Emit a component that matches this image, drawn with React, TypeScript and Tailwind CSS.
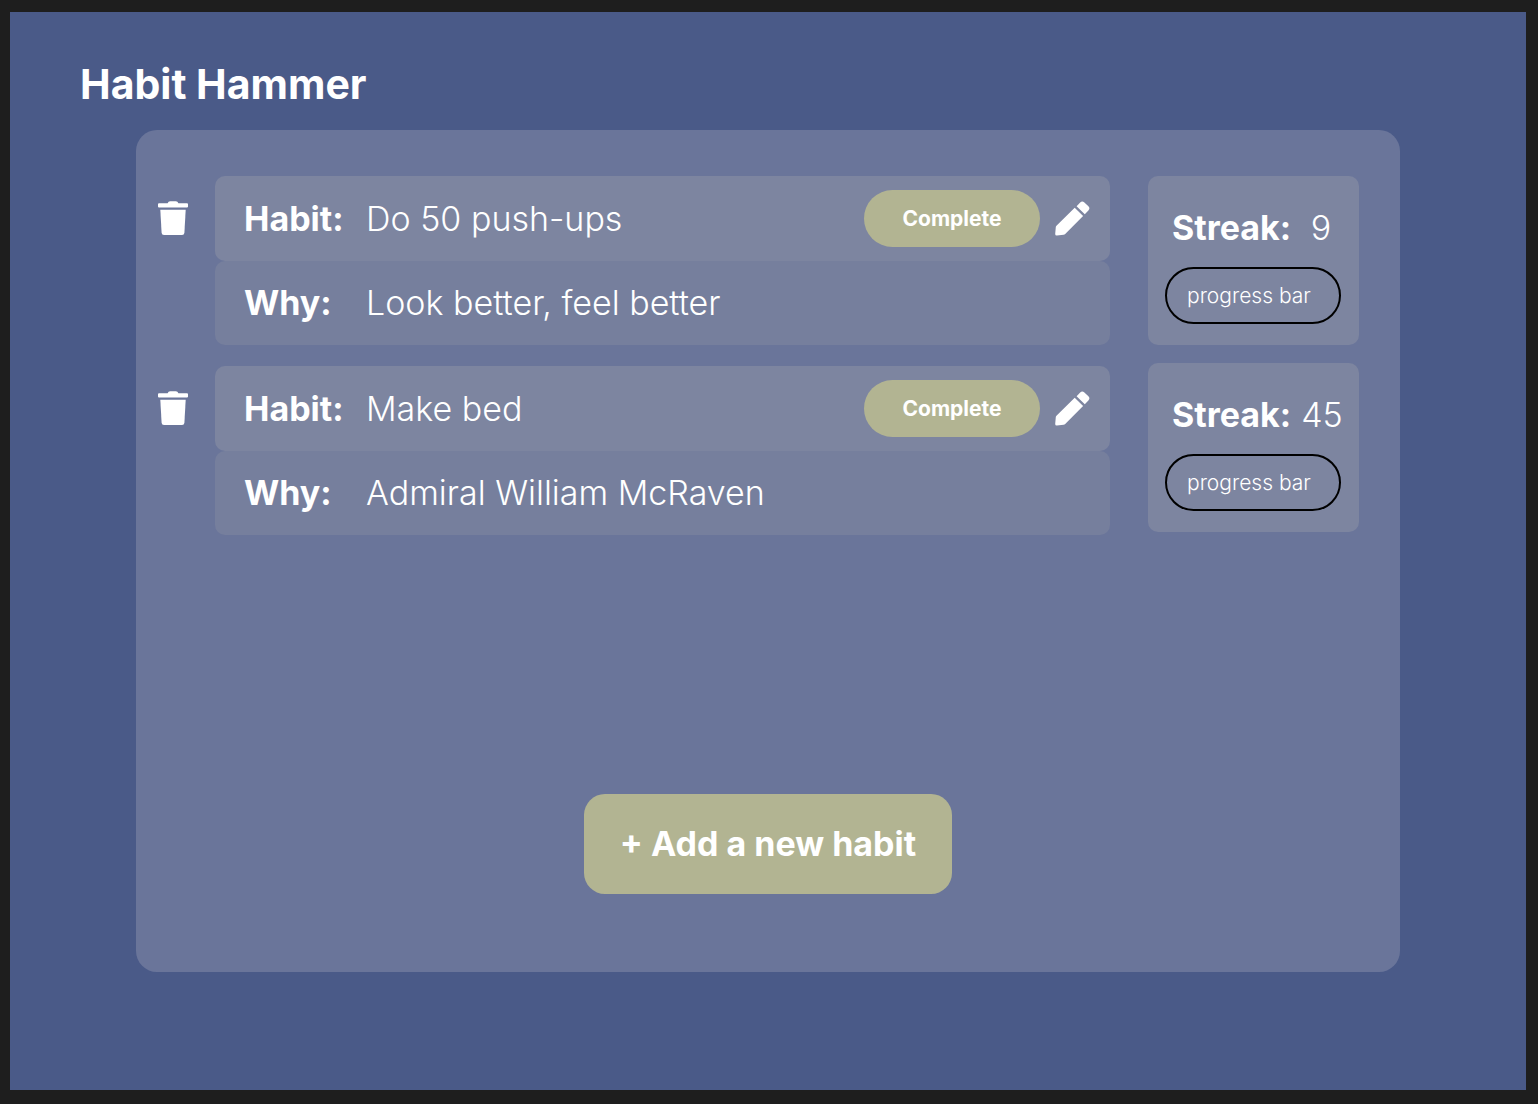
type Habit = {
  name: string;
  why: string;
  streak: number;
};

const habits: Habit[] = [
  { name: "Do 50 push-ups", why: "Look better, feel better", streak: 9 },
  { name: "Make bed", why: "Admiral William McRaven", streak: 45 },
];

function TrashIcon() {
  return (
    <svg viewBox="0 0 30 34" className="h-[34px] w-[30px]" fill="currentColor" aria-hidden="true">
      <path d="M1 2.2h8.6L10.600.8Q11.200.200 12.200.200h5.600q1 0 1.600.600l1 1.400H29q1 0 1 1v2.400q0 .900-1 .900H1q-1 0-1-.900V3.200q0-1 1-1Z" />
      <path d="M2.300 8.700h25.400l-1.300 23q-.2 2.300-2.400 2.300H6q-2.200 0-2.400-2.300Z" />
    </svg>
  );
}

function PencilIcon() {
  return (
    <svg viewBox="0 0 35 35" className="size-[35px]" fill="currentColor" aria-hidden="true">
      <path d="M25.200 1.400q2-2 4.200 0l4 3.900q2 2 0 4.100l-3.600 3.900-8.200-8.100Z" />
      <path d="M19.700 6.700l8.400 8.200L10.200 33q-.7.700-1.600.8l-6.700.7q-1.800.1-1.700-1.600l.6-6.800q.1-1 .9-1.700Z" />
    </svg>
  );
}

function HabitItem({ habit }: { habit: Habit }) {
  return (
    <li className="flex">
      <div className="flex h-[84px] w-[79px] shrink-0 items-center pl-[22px]">
        <button type="button" aria-label={`Delete ${habit.name}`} className="cursor-pointer">
          <TrashIcon />
        </button>
      </div>
      <dl className="min-w-0 flex-1 text-[34px] leading-10">
        <div className="flex min-h-[85px] items-center rounded-[10px] bg-[#7d85a0] pr-5 pl-[29px]">
          <dt className="w-[122px] shrink-0 font-bold">Habit:</dt>
          <dd className="min-w-0 flex-1 font-light">{habit.name}</dd>
          <dd className="flex items-center gap-[15px]">
            <button
              type="button"
              className="h-[57px] w-44 cursor-pointer rounded-full bg-[#b2b492] text-[21px] leading-6 font-bold"
            >
              Complete
            </button>
            <button type="button" aria-label={`Edit ${habit.name}`} className="cursor-pointer">
              <PencilIcon />
            </button>
          </dd>
        </div>
        <div className="flex min-h-[84px] items-center rounded-[10px] bg-[#767f9d] px-[29px]">
          <dt className="w-[122px] shrink-0 font-bold">Why:</dt>
          <dd className="min-w-0 flex-1 font-light">{habit.why}</dd>
        </div>
      </dl>
    </li>
  );
}

function StreakCard({ streak }: { streak: number }) {
  return (
    <li className="flex h-[169px] flex-col rounded-[10px] bg-[#7d85a0] pt-8 pr-[18px] pl-[17px]">
      <div className="flex items-center pl-[7px] text-[34px] leading-10">
        <span className="font-bold">Streak:</span>
        <span className="flex-1 pl-[10px] text-center font-light">{streak}</span>
      </div>
      <div className="mt-[19px] flex h-[57px] items-center rounded-full border-2 border-black pl-5 text-[21px] leading-6 font-[350]">
        progress bar
      </div>
    </li>
  );
}

export default function App() {
  return (
    <div className="flex min-h-screen flex-col bg-[#1e1e1e] pt-3 pr-3 pb-[14px] pl-[10px] font-['Inter',sans-serif] text-white">
      <main className="flex flex-1 flex-col bg-[#4a5a88] pt-12 pb-[118px]">
        <h1 className="pl-[70px] text-[41px] leading-[48px] font-bold">Habit Hammer</h1>
        <section
          aria-label="Habits"
          className="mx-[126px] mt-[22px] flex flex-1 flex-col rounded-[21px] bg-[#6a759a] pt-[46px] pb-[78px]"
        >
          <div className="flex gap-[38px] pr-[41px]">
            <ul className="flex min-w-0 flex-1 flex-col gap-[21px]">
              {habits.map((habit) => (
                <HabitItem key={habit.name} habit={habit} />
              ))}
            </ul>
            <ul className="flex w-[211px] shrink-0 flex-col gap-[18px]">
              {habits.map((habit) => (
                <StreakCard key={habit.name} streak={habit.streak} />
              ))}
            </ul>
          </div>
          <button
            type="button"
            className="mx-auto mt-auto h-[100px] w-[368px] cursor-pointer rounded-[21px] bg-[#b2b492] text-[34px] leading-10 font-bold"
          >
            + Add a new habit
          </button>
        </section>
      </main>
    </div>
  );
}
